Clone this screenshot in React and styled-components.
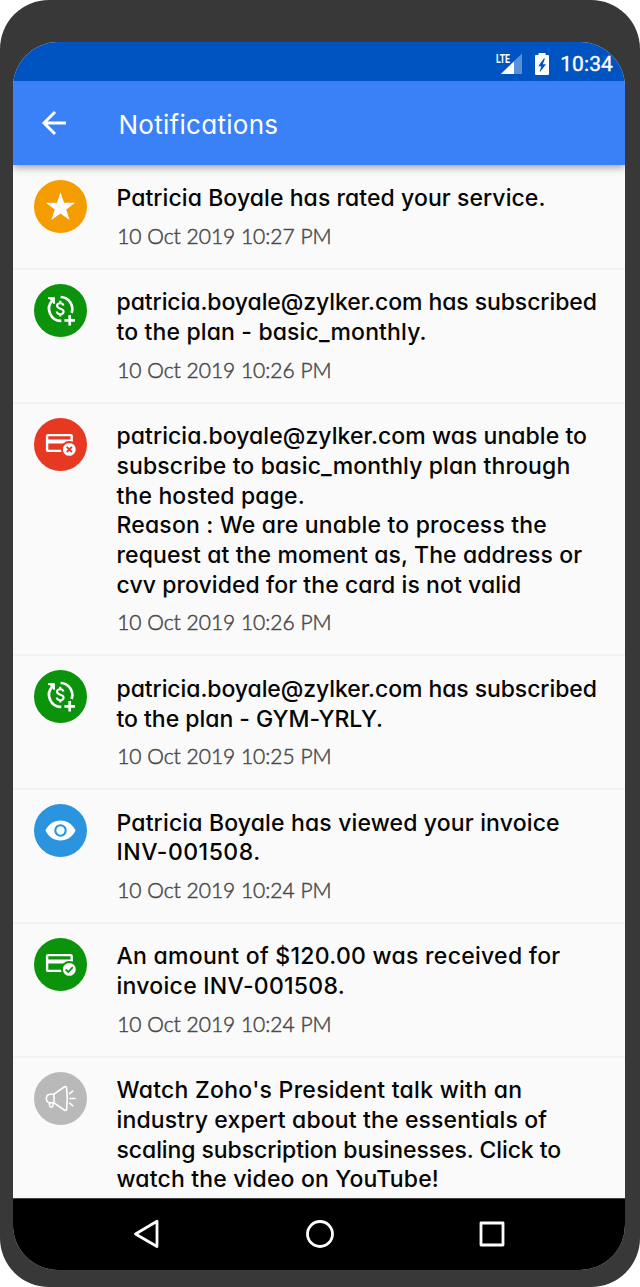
import React from 'react';
import styled, { createGlobalStyle } from 'styled-components';

const GlobalStyle = createGlobalStyle`
  * {
    box-sizing: border-box;
  }
  body {
    margin: 0;
    background: #fff;
    font-family: Inter, 'Open Sans', sans-serif;
  }
`;

const Phone = styled.div`
  display: flex;
  width: 640px;
  height: 1287px;
  padding: 42px 15px 17px 13px;
  background: #383838;
  border-radius: 49px;
`;

const Screen = styled.div`
  display: flex;
  flex: 1;
  flex-flow: column;
  overflow: hidden;
  background: #fafafa;
  border-radius: 45px;
`;

const StatusBar = styled.div`
  display: flex;
  flex: 0 0 39.4px;
  align-items: center;
  justify-content: flex-end;
  padding: 5px 12px 0 0;
  background: #0054c2;
  z-index: 2;
`;

const Signal = styled.svg`
  width: 28px;
  height: 24px;
  margin-right: 11px;
`;

const Battery = styled.svg`
  width: 16px;
  height: 22px;
  margin-right: 10px;
`;

const Clock = styled.div`
  color: #fff;
  font-family: Roboto, sans-serif;
  font-size: 21px;
  font-weight: 400;
  line-height: 24px;
  letter-spacing: 0.1px;
  -webkit-text-stroke: 0.35px #fff;
`;

const AppBar = styled.div`
  display: flex;
  flex: 0 0 84px;
  align-items: center;
  padding-left: 28px;
  background: #3a80f7;
  box-shadow: 0 2px 8px rgba(0, 0, 0, 0.4);
  z-index: 1;
`;

const BackArrow = styled.svg`
  width: 26px;
  height: 26px;
`;

const Title = styled.div`
  margin: 2px 0 0 51.5px;
  color: #fff;
  font-size: 26px;
  letter-spacing: 0.28px;
  font-feature-settings: 'cv11' 1;
`;

const List = styled.div`
  flex: 1;
  min-height: 0;
  padding-top: 0.6px;
  overflow: hidden;
`;

const Row = styled.div`
  display: flex;
  padding: 14px 0 19.15px 21px;
  border-bottom: 2px solid #f3f3f3;
`;

const Badge = styled.div`
  flex: 0 0 53px;
  height: 53px;
  border-radius: 50%;
  background: ${(props) => props.$color};
  svg {
    display: block;
    width: 53px;
    height: 53px;
  }
`;

const Body = styled.div`
  flex: 1;
  padding: 4.5px 0 0 29.5px;
`;

const Line = styled.div`
  height: 29.75px;
  line-height: 29.75px;
  color: #050505;
  font-size: 23px;
  font-weight: 500;
  white-space: nowrap;
  letter-spacing: ${(props) => props.$track}px;
  font-feature-settings: 'cv11' 1;
`;

const DateText = styled.div`
  height: 26px;
  margin-top: 8.6px;
  padding-left: 0.7px;
  color: #4a4a4a;
  font-family: Lato, sans-serif;
  font-size: 21px;
  font-weight: 300;
  line-height: 26px;
  -webkit-text-stroke: 0.5px #4a4a4a;
`;

const NavBar = styled.div`
  display: flex;
  flex: 0 0 72px;
  align-items: center;
  justify-content: space-between;
  padding: 0 118px 1px 119px;
  background: #000;
  border-top: 1px solid #444;
  svg {
    width: 30px;
    height: 30px;
    fill: none;
    stroke: #fff;
    stroke-width: 2.8;
    stroke-linejoin: round;
  }
`;

const StarIcon = () => (
  <svg viewBox="0 0 53 53">
    <path fill="#fff" d="M26.5 12.3l3.5 10.5h11.2l-9 6.6 3.4 10.6-9.1-6.5-9.1 6.5 3.4-10.6-9-6.6H23z" />
  </svg>
);

const SubscribeIcon = () => (
  <svg viewBox="0 0 53 53" fill="none" stroke="#fff">
    <path d="M18.3 16.6A12 12 0 0 0 27.3 36.8" strokeWidth="2.7" />
    <path d="M26.6 13A12 12 0 0 1 37.6 29" strokeWidth="2.7" />
    <path d="M13.6 13.3h7.1v6.9z" fill="#fff" stroke="none" />
    <path d="M14 14.2h6v5.5" strokeWidth="1.6" />
    <path d="M29.4 21.6c-.3-1.7-1.5-2.3-3.2-2.3-1.8 0-3.1.9-3.1 2.5 0 3.8 6.5 2 6.5 5.8 0 1.7-1.4 2.6-3.3 2.6-2 0-3.3-.8-3.5-2.7M26.3 16.8v2.6M26.3 30v2.6" strokeWidth="2.1" />
    <path d="M35.7 31v10.6M30.4 36.3H41" strokeWidth="2.7" />
  </svg>
);

// card glyph shared by the failed and received payments
const CardIcon = ({ color, mark }) => (
  <svg viewBox="0 0 53 53" fill="none" stroke="#fff">
    <rect x="13.1" y="17.1" width="24.6" height="15.8" rx="1" strokeWidth="2.4" />
    <path d="M13 23.5h24.7" strokeWidth="4" />
    <circle cx="35.3" cy="31.4" r="8.4" fill={color} stroke="none" />
    <circle cx="35.3" cy="31.4" r="6.4" fill="#fff" stroke="none" />
    <path d={mark} stroke={color} strokeWidth="1.8" />
  </svg>
);

const EyeIcon = () => (
  <svg viewBox="0 0 53 53">
    <path fill="#fff" d="M11.4 26.5C14.6 20.1 20 16.5 26.5 16.5s11.9 3.6 15.1 10c-3.2 6.4-8.6 10-15.1 10s-11.9-3.6-15.1-10z" />
    <circle cx="26.5" cy="26.5" r="5.2" fill="#fff" stroke="#2b94de" strokeWidth="2.1" />
  </svg>
);

const MegaphoneIcon = () => (
  <svg viewBox="0 0 53 53" fill="none" stroke="#fff" strokeWidth="1.6" strokeLinejoin="round" strokeLinecap="round">
    <path d="M20 22.2h-3.6c-2.4 0-4 1.8-4 4.3s1.6 4.3 4 4.3H20z" />
    <path d="M20 22.2l10.2-7.2c1.2-.8 2.2-.5 2.4.9.9 7 .9 14.2 0 21.2-.2 1.4-1.2 1.7-2.4.9L20 30.8" />
    <path d="M15.6 31v2.6c0 2.2 3.4 2.2 3.4 0V31M36 26.5h5M35.6 21.7l3.2-2.7M35.6 31.1l3.2 2.7" />
  </svg>
);

const GREEN = '#0c930c';
const RED = '#e73921';

const subscribe = { color: GREEN, icon: <SubscribeIcon /> };
const failed = { color: RED, icon: <CardIcon color={RED} mark="M32.7 28.8l5.2 5.2M37.9 28.8l-5.2 5.2" /> };
const received = { color: GREEN, icon: <CardIcon color={GREEN} mark="M31.7 31.5l2.6 2.5 4.5-4.8" /> };

// every line carries its own letter spacing
const notifications = [
  {
    color: '#f59c00',
    icon: <StarIcon />,
    lines: [['Patricia Boyale has rated your service.', 0.07]],
    date: '10 Oct 2019 10:27 PM',
  },
  {
    ...subscribe,
    lines: [
      ['patricia.boyale@zylker.com has subscribed', -0.08],
      ['to the plan - basic_monthly.', 0.14],
    ],
    date: '10 Oct 2019 10:26 PM',
  },
  {
    ...failed,
    lines: [
      ['patricia.boyale@zylker.com was unable to', 0.05],
      ['subscribe to basic_monthly plan through', 0.12],
      ['the hosted page.', 0.14],
      ['Reason : We are unable to process the', 0.17],
      ['request at the moment as, The address or', 0.1],
      ['cvv provided for the card is not valid', 0.07],
    ],
    date: '10 Oct 2019 10:26 PM',
  },
  {
    ...subscribe,
    lines: [
      ['patricia.boyale@zylker.com has subscribed', -0.08],
      ['to the plan - GYM-YRLY.', -0.03],
    ],
    date: '10 Oct 2019 10:25 PM',
  },
  {
    color: '#2b94de',
    icon: <EyeIcon />,
    lines: [
      ['Patricia Boyale has viewed your invoice', 0.15],
      ['INV-001508.', 0.5],
    ],
    date: '10 Oct 2019 10:24 PM',
  },
  {
    ...received,
    lines: [
      ['An amount of $120.00 was received for', 0.28],
      ['invoice INV-001508.', 0.27],
    ],
    date: '10 Oct 2019 10:24 PM',
  },
  {
    color: '#b9b9b9',
    icon: <MegaphoneIcon />,
    lines: [
      ["Watch Zoho's President talk with an", 0.27],
      ['industry expert about the essentials of', 0.14],
      ['scaling subscription businesses. Click to', -0.08],
      ['watch the video on YouTube!', 0.16],
    ],
  },
];

class App extends React.Component {
  render() {
    return (
      <Phone>
        <GlobalStyle />
        <Screen>
          <StatusBar>
            <Signal viewBox="0 0 28 24">
              <path fill="#5590d8" d="M27 1.5V22H5.5z" />
              <path fill="#fff" d="M19 9.5V22H6z" />
              <path fill="#0054c2" d="M0 0h15.500v12H0z" />
              <text x="1" y="10.8" fill="#fff" fontFamily="Roboto, sans-serif" fontWeight="700" fontSize="13" textLength="14" lengthAdjust="spacingAndGlyphs">LTE</text>
            </Signal>
            <Battery viewBox="0 0 16 22">
              <path fill="#fff" d="M4.5 0h7v2H14a1 1 0 0 1 1 1v18a1 1 0 0 1-1 1H2a1 1 0 0 1-1-1V3a1 1 0 0 1 1-1h2.5z" />
              <path fill="#0054c2" d="M9.8 5.5L4.2 13.2h3L5.6 19.5l6.4-8.2H8.8L11 5.5z" />
            </Battery>
            <Clock>10:34</Clock>
          </StatusBar>
          <AppBar>
            <BackArrow viewBox="0 0 26 26" fill="none" stroke="#fff" strokeWidth="2.9">
              <path d="M25 13H3M14 2L3 13l11 11" />
            </BackArrow>
            <Title>Notifications</Title>
          </AppBar>
          <List>
            {notifications.map((item, index) => (
              <Row key={index}>
                <Badge $color={item.color}>{item.icon}</Badge>
                <Body>
                  {item.lines.map(([text, track]) => <Line key={text} $track={track}>{text}</Line>)}
                  {item.date && <DateText>{item.date}</DateText>}
                </Body>
              </Row>
            ))}
          </List>
          <NavBar>
            <svg viewBox="0 0 30 30"><path d="M25 2.3v25.2L3.500 15z" /></svg>
            <svg viewBox="0 0 30 30"><circle cx="15" cy="15" r="12.5" /></svg>
            <svg viewBox="0 0 30 30"><rect x="4" y="4" width="22" height="22" /></svg>
          </NavBar>
        </Screen>
      </Phone>
    );
  }
}

export default App;
